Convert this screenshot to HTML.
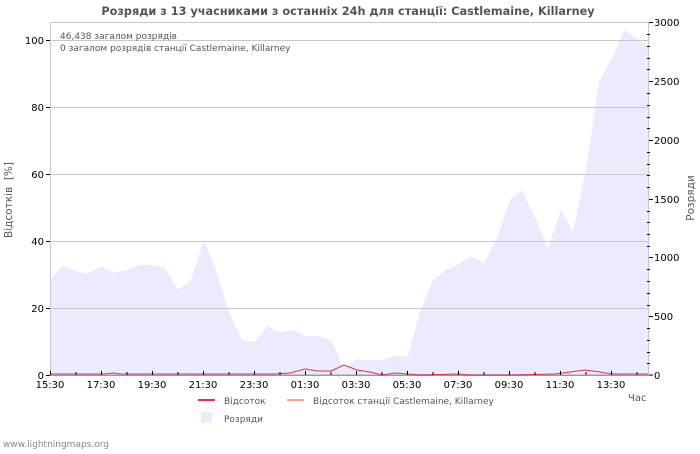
<!DOCTYPE html>
<html><head><meta charset="utf-8"><style>
body{margin:0;background:#fff;width:700px;height:450px;overflow:hidden;font-family:"DejaVu Sans","Liberation Sans",sans-serif}
</style></head><body>
<svg width="700" height="450" xmlns="http://www.w3.org/2000/svg" font-family="DejaVu Sans, Liberation Sans, sans-serif">
<text x="348" y="15" text-anchor="middle" font-size="11.3" font-weight="bold" fill="#555">Розряди з 13 учасниками з останніх 24h для станції: Castlemaine, Killarney</text>
<polygon fill="#ebebff" points="50,375 50,280 63,265 75,271 88,274 101,266 114,273 127,270 140,265 152,265 165,268 178,290 191,280 204,240 216,270 229,312 242,340 255,342 267,326 280,332 293,330 306,336 318,336 331,340 344,368 357,359 369,360 382,360 395,356 408,356 420,312 433,280 446,270 459,264 471,256 484,263 497,238 510,200 522,190 535,218 548,248 561,210 573,232 586,170 599,82 612,58 624,30 637,38 649,47 649,375"/>
<g stroke="#c8c8c8" stroke-width="1">
<line x1="50" y1="40.5" x2="649" y2="40.5"/><line x1="50" y1="107.5" x2="649" y2="107.5"/><line x1="50" y1="174.5" x2="649" y2="174.5"/><line x1="50" y1="241.5" x2="649" y2="241.5"/><line x1="50" y1="308.5" x2="649" y2="308.5"/>
<rect x="50.5" y="22.5" width="598" height="352" fill="none"/>
</g>
<line x1="50" y1="375.5" x2="649" y2="375.5" stroke="#999"/>
<polyline fill="none" stroke="#e0304a" stroke-width="1" points="50,374 70,374 105,374 113,373 120,374 186,374 210,374 275,374 290,373 305,369 318,371 331,371 344,365 357,370 370,372 382,375 395,373 420,375 459,374 470,375 510,375 555,374 570,372 585,370 600,372 612,374 648,374"/>
<g stroke="#000" stroke-width="1">
<line x1="50.5" y1="375" x2="50.5" y2="371"/><line x1="76" y1="375" x2="76" y2="372"/><line x1="101.5" y1="375" x2="101.5" y2="371"/><line x1="127" y1="375" x2="127" y2="372"/><line x1="152.5" y1="375" x2="152.5" y2="371"/><line x1="178" y1="375" x2="178" y2="372"/><line x1="203.5" y1="375" x2="203.5" y2="371"/><line x1="229" y1="375" x2="229" y2="372"/><line x1="254.5" y1="375" x2="254.5" y2="371"/><line x1="280" y1="375" x2="280" y2="372"/><line x1="305.5" y1="375" x2="305.5" y2="371"/><line x1="331" y1="375" x2="331" y2="372"/><line x1="356.5" y1="375" x2="356.5" y2="371"/><line x1="382" y1="375" x2="382" y2="372"/><line x1="407.5" y1="375" x2="407.5" y2="371"/><line x1="433" y1="375" x2="433" y2="372"/><line x1="458.5" y1="375" x2="458.5" y2="371"/><line x1="484" y1="375" x2="484" y2="372"/><line x1="509.5" y1="375" x2="509.5" y2="371"/><line x1="535" y1="375" x2="535" y2="372"/><line x1="560.5" y1="375" x2="560.5" y2="371"/><line x1="586" y1="375" x2="586" y2="372"/><line x1="611.5" y1="375" x2="611.5" y2="371"/><line x1="637" y1="375" x2="637" y2="372"/>
<line x1="46" y1="40.5" x2="50" y2="40.5"/><line x1="46" y1="107.5" x2="50" y2="107.5"/><line x1="46" y1="174.5" x2="50" y2="174.5"/><line x1="46" y1="241.5" x2="50" y2="241.5"/><line x1="46" y1="308.5" x2="50" y2="308.5"/><line x1="46" y1="375.5" x2="50" y2="375.5"/>
</g>
<g stroke="#000" stroke-width="1">
<line x1="649" y1="22.5" x2="653" y2="22.5"/><line x1="649" y1="81.5" x2="653" y2="81.5"/><line x1="649" y1="140.5" x2="653" y2="140.5"/><line x1="649" y1="199.5" x2="653" y2="199.5"/><line x1="649" y1="257.5" x2="653" y2="257.5"/><line x1="649" y1="316.5" x2="653" y2="316.5"/><line x1="649" y1="375" x2="653" y2="375"/>
</g>
<g stroke="#000" stroke-width="1">
<line x1="647" y1="34.5" x2="650" y2="34.5"/><line x1="647" y1="46.5" x2="650" y2="46.5"/><line x1="647" y1="58.5" x2="650" y2="58.5"/><line x1="647" y1="69.5" x2="650" y2="69.5"/><line x1="647" y1="93.5" x2="650" y2="93.5"/><line x1="647" y1="105.5" x2="650" y2="105.5"/><line x1="647" y1="117.5" x2="650" y2="117.5"/><line x1="647" y1="128.5" x2="650" y2="128.5"/><line x1="647" y1="152.5" x2="650" y2="152.5"/><line x1="647" y1="164.5" x2="650" y2="164.5"/><line x1="647" y1="175.5" x2="650" y2="175.5"/><line x1="647" y1="187.5" x2="650" y2="187.5"/><line x1="647" y1="211.5" x2="650" y2="211.5"/><line x1="647" y1="222.5" x2="650" y2="222.5"/><line x1="647" y1="234.5" x2="650" y2="234.5"/><line x1="647" y1="246.5" x2="650" y2="246.5"/><line x1="647" y1="269.5" x2="650" y2="269.5"/><line x1="647" y1="281.5" x2="650" y2="281.5"/><line x1="647" y1="293.5" x2="650" y2="293.5"/><line x1="647" y1="305.5" x2="650" y2="305.5"/><line x1="647" y1="328.5" x2="650" y2="328.5"/><line x1="647" y1="340.5" x2="650" y2="340.5"/><line x1="647" y1="352.5" x2="650" y2="352.5"/><line x1="647" y1="363.5" x2="650" y2="363.5"/>
</g>
<g font-size="10" fill="#000" text-anchor="end">
<text x="44" y="44">100</text><text x="44" y="111">80</text><text x="44" y="178">60</text><text x="44" y="245">40</text><text x="44" y="312">20</text><text x="44" y="379">0</text>
</g>
<g font-size="10" fill="#000">
<text x="654" y="26">3000</text><text x="654" y="85">2500</text><text x="654" y="144">2000</text><text x="654" y="203">1500</text><text x="654" y="261">1000</text><text x="654" y="320">500</text><text x="654" y="379">0</text>
</g>
<g font-size="10" fill="#000" text-anchor="middle">
<text x="50" y="388">15:30</text><text x="101" y="388">17:30</text><text x="152" y="388">19:30</text><text x="203" y="388">21:30</text><text x="254" y="388">23:30</text><text x="305" y="388">01:30</text><text x="356" y="388">03:30</text><text x="407" y="388">05:30</text><text x="458" y="388">07:30</text><text x="509" y="388">09:30</text><text x="560" y="388">11:30</text><text x="611" y="388">13:30</text>
</g>
<text x="628" y="401" font-size="10" fill="#555">Час</text>
<text x="12" y="200" font-size="10.5" fill="#555" text-anchor="middle" xml:space="preserve" style="white-space:pre" transform="rotate(-90 12 200)">Відсотків  [%]</text>
<text x="694" y="198" font-size="10.5" fill="#555" text-anchor="middle" transform="rotate(-90 694 198)">Розряди</text>
<text x="60" y="39" font-size="9" fill="#555">46,438 загалом розрядів</text>
<text x="60" y="51" font-size="9" fill="#555">0 загалом розрядів станції Castlemaine, Killarney</text>
<line x1="198" y1="400" x2="215" y2="400" stroke="#e0304a" stroke-width="2"/>
<text x="224" y="404" font-size="9" fill="#555">Відсоток</text>
<line x1="287" y1="400" x2="304" y2="400" stroke="#f4a0a0" stroke-width="2"/>
<text x="313" y="404" font-size="9" fill="#555">Відсоток станції Castlemaine, Killarney</text>
<rect x="201" y="412" width="11" height="11" fill="#ebebff"/>
<text x="224" y="422" font-size="9" fill="#555">Розряди</text>
<text x="3" y="447" font-size="9" fill="#888">www.lightningmaps.org</text>
</svg>
</body></html>
